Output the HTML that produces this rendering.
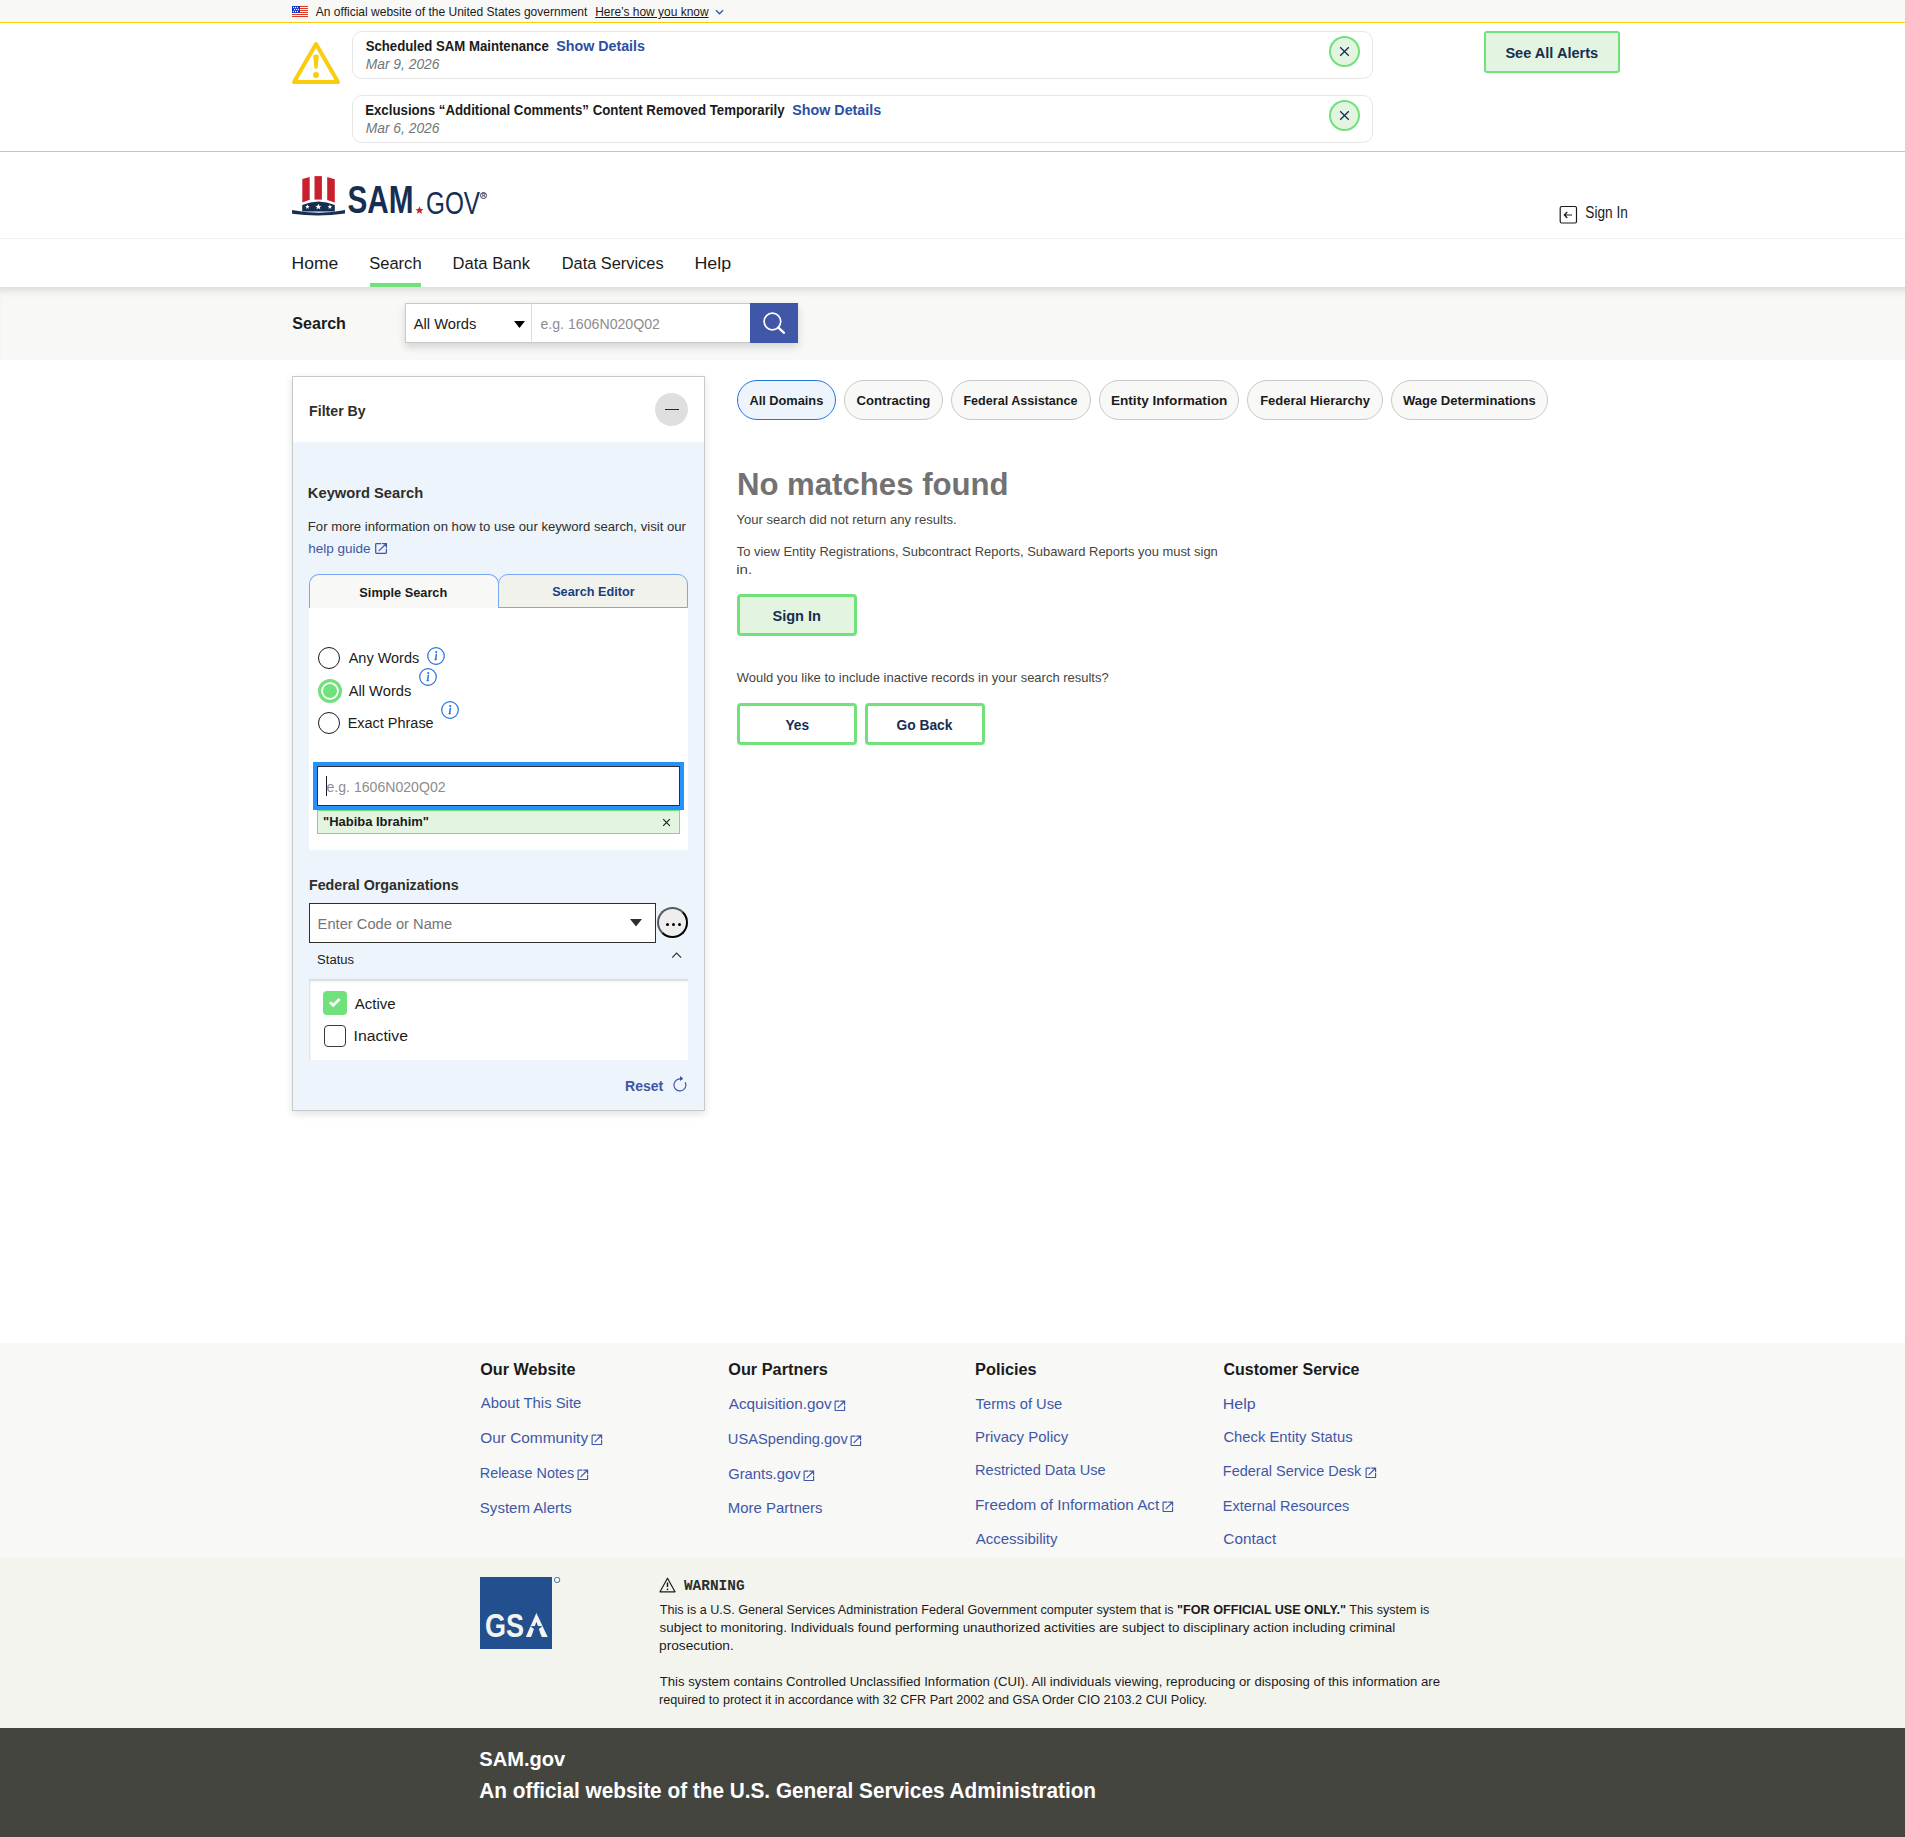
<!DOCTYPE html>
<html><head><meta charset="utf-8"><title>SAM.gov</title>
<style>
html,body{margin:0;padding:0;width:1905px;height:1837px;overflow:hidden;background:#fff;position:relative;font-family:"Liberation Sans", sans-serif}
body>div, body>svg{position:absolute}
.t{white-space:nowrap}
.ext{vertical-align:-1px}
b{font-weight:700}
#fit0{transform:translateX(-0.18px) scaleX(0.9468);transform-origin:0 0}#fit1{transform:translateX(-0.86px) scaleX(0.9424);transform-origin:0 0}#fit2{transform:translateX(-0.32px) scaleX(0.9413);transform-origin:0 0}#fit3{transform:translateX(-0.68px) scaleX(1.0169);transform-origin:0 0}#fit4{transform:translateX(-0.31px) scaleX(0.9879);transform-origin:0 0}#fit5{transform:translateX(-0.83px) scaleX(0.9463);transform-origin:0 0}#fit6{transform:translateX(-0.67px) scaleX(1.0192);transform-origin:0 0}#fit7{transform:translateX(-0.31px) scaleX(0.9879);transform-origin:0 0}#fit8{transform:translateX(-0.60px) scaleX(1.0038);transform-origin:0 0}#fit9{transform:translateX(-0.64px) scaleX(0.8422);transform-origin:0 0}#fit10{transform:translateX(-1.39px) scaleX(1.0440);transform-origin:0 0}#fit11{transform:translateX(-0.86px) scaleX(0.9867);transform-origin:0 0}#fit12{transform:translateX(-1.45px) scaleX(0.9877);transform-origin:0 0}#fit13{transform:translateX(-1.29px) scaleX(0.9751);transform-origin:0 0}#fit14{transform:translateX(-1.62px) scaleX(1.0635);transform-origin:0 0}#fit15{transform:translateX(-0.68px) scaleX(0.9455);transform-origin:0 0}#fit16{transform:translateX(-0.23px) scaleX(0.9680);transform-origin:0 0}#fit17{transform:translateX(-0.62px) scaleX(0.9319);transform-origin:0 0}#fit18{transform:translateX(-0.90px) scaleX(0.9954);transform-origin:0 0}#fit19{transform:translateX(-1.13px) scaleX(1.0219);transform-origin:0 0}#fit20{transform:translateX(-1.18px) scaleX(1.0102);transform-origin:0 0}#fit21{transform:translateX(-0.78px) scaleX(1.0399);transform-origin:0 0}#fit22{transform:translateX(-0.66px) scaleX(0.9812);transform-origin:0 0}#fit23{transform:translateX(-0.86px) scaleX(0.9758);transform-origin:0 0}#fit24{transform:translateX(-0.34px) scaleX(0.9865);transform-origin:0 0}#fit25{transform:translateX(-0.34px) scaleX(1.0023);transform-origin:0 0}#fit26{transform:translateX(-1.29px) scaleX(0.9838);transform-origin:0 0}#fit27{transform:translateX(-0.51px) scaleX(0.9592);transform-origin:0 0}#fit28{transform:translateX(-0.94px) scaleX(0.9966);transform-origin:0 0}#fit29{transform:translateX(-1.03px) scaleX(1.0184);transform-origin:0 0}#fit30{transform:translateX(-1.39px) scaleX(0.9995);transform-origin:0 0}#fit31{transform:translateX(-0.89px) scaleX(1.0835);transform-origin:0 0}#fit32{transform:translateX(-0.23px) scaleX(1.0223);transform-origin:0 0}#fit33{transform:translateX(-1.41px) scaleX(1.0731);transform-origin:0 0}#fit34{transform:translateX(-0.98px) scaleX(1.0154);transform-origin:0 0}#fit35{transform:translateX(-0.59px) scaleX(0.9834);transform-origin:0 0}#fit36{transform:translateX(-0.48px) scaleX(1.0108);transform-origin:0 0}#fit37{transform:translateX(-0.57px) scaleX(0.9666);transform-origin:0 0}#fit38{transform:translateX(-1.02px) scaleX(1.0455);transform-origin:0 0}#fit39{transform:translateX(-0.87px) scaleX(0.9997);transform-origin:0 0}#fit40{transform:translateX(-0.10px) scaleX(1.0037);transform-origin:0 0}#fit41{transform:translateX(-2.10px) scaleX(0.9890);transform-origin:0 0}#fit42{transform:translateX(-0.53px) scaleX(1.0046);transform-origin:0 0}#fit43{transform:translateX(-0.28px) scaleX(0.9952);transform-origin:0 0}#fit44{transform:translateX(-0.74px) scaleX(1.1632);transform-origin:0 0}#fit45{transform:translateX(-0.56px) scaleX(1.0399);transform-origin:0 0}#fit46{transform:translateX(-0.32px) scaleX(0.9983);transform-origin:0 0}#fit47{transform:translateX(-0.59px) scaleX(0.9794);transform-origin:0 0}#fit48{transform:translateX(-0.55px) scaleX(0.9864);transform-origin:0 0}#fit49{transform:translateX(-0.76px) scaleX(0.9665);transform-origin:0 0}#fit50{transform:translateX(-0.23px) scaleX(1.0397);transform-origin:0 0}#fit51{transform:translateX(-0.85px) scaleX(1.0783);transform-origin:0 0}#fit52{transform:translateX(-1.19px) scaleX(1.0052);transform-origin:0 0}#fit53{transform:translateX(-1.16px) scaleX(1.0510);transform-origin:0 0}#fit54{transform:translateX(-0.76px) scaleX(0.9710);transform-origin:0 0}#fit55{transform:translateX(-0.23px) scaleX(1.0691);transform-origin:0 0}#fit56{transform:translateX(-1.16px) scaleX(1.0263);transform-origin:0 0}#fit57{transform:translateX(-0.85px) scaleX(1.0351);transform-origin:0 0}#fit58{transform:translateX(-1.24px) scaleX(1.0455);transform-origin:0 0}#fit59{transform:translateX(-0.91px) scaleX(0.9704);transform-origin:0 0}#fit60{transform:translateX(-0.40px) scaleX(1.0286);transform-origin:0 0}#fit61{transform:translateX(-0.98px) scaleX(1.0469);transform-origin:0 0}#fit62{transform:translateX(-0.96px) scaleX(1.0211);transform-origin:0 0}#fit63{transform:translateX(-1.00px) scaleX(1.0684);transform-origin:0 0}#fit64{transform:translateX(-0.33px) scaleX(1.0516);transform-origin:0 0}#fit65{transform:translateX(-0.55px) scaleX(0.9529);transform-origin:0 0}#fit66{transform:translateX(-1.31px) scaleX(1.1183);transform-origin:0 0}#fit67{transform:translateX(-0.61px) scaleX(1.0352);transform-origin:0 0}#fit68{transform:translateX(-1.19px) scaleX(1.0136);transform-origin:0 0}#fit69{transform:translateX(-1.19px) scaleX(1.0141);transform-origin:0 0}#fit70{transform:translateX(-0.63px) scaleX(1.0715);transform-origin:0 0}#fit71{transform:translateX(-0.11px) scaleX(1.0316);transform-origin:0 0}#fit72{transform:translateX(-0.26px) scaleX(0.9942);transform-origin:0 0}#fit73{transform:translateX(-0.44px) scaleX(1.0559);transform-origin:0 0}#fit74{transform:translateX(-0.98px) scaleX(1.0815);transform-origin:0 0}#fit75{transform:translateX(-0.27px) scaleX(1.0360);transform-origin:0 0}#fit76{transform:translateX(-0.91px) scaleX(0.9941);transform-origin:0 0}#fit77{transform:translateX(-0.75px) scaleX(0.9803);transform-origin:0 0}#fit78{transform:translateX(-0.68px) scaleX(0.9529);transform-origin:0 0}
</style></head><body>
<div style="left:0px;top:0px;width:1905px;height:22px;background:#f8f8f7"></div>
<div style="left:0px;top:22px;width:1905px;height:1px;background:#facc10"></div>
<svg style="left:292px;top:6px" width="16" height="11" viewBox="0 0 16 11" shape-rendering="crispEdges">
<rect width="16" height="11" fill="#fff"/>
<g fill="#d83c22"><rect y="0" width="16" height="1"/><rect y="2" width="16" height="1"/><rect y="4" width="16" height="1"/><rect y="6" width="16" height="1"/><rect y="8" width="16" height="1"/><rect y="10" width="16" height="1"/></g>
<rect width="8" height="7" fill="#0b2fbf"/>
</svg>
<svg style="left:292px;top:6px" width="16" height="11" viewBox="0 0 16 11">
<g fill="#fff"><circle cx="1.5" cy="1.5" r=".65"/><circle cx="3.5" cy="1.5" r=".65"/><circle cx="5.5" cy="1.5" r=".65"/><circle cx="2.5" cy="3.5" r=".65"/><circle cx="4.5" cy="3.5" r=".65"/><circle cx="6.5" cy="3.5" r=".65"/><circle cx="1.5" cy="5.5" r=".65"/><circle cx="3.5" cy="5.5" r=".65"/><circle cx="5.5" cy="5.5" r=".65"/></g>
</svg>
<div class="t " id="fit0" style="left:315.7px;top:4.00px;font-size:12.7px;line-height:16px;font-weight:400;color:#1b1b1b;">An official website of the United States government</div>
<div class="t " id="fit1" style="left:596px;top:4.00px;font-size:12.7px;line-height:16px;font-weight:400;color:#1b1b1b;text-decoration:underline;text-underline-offset:1px">Here’s how you know</div>
<svg style="left:714.5px;top:9px" width="9" height="7" viewBox="0 0 9 7"><path d="M1 1.3 L4.5 4.8 L8 1.3" fill="none" stroke="#3452a8" stroke-width="1.3"/></svg>
<svg style="left:291px;top:41px" width="50" height="44" viewBox="0 0 50 44">
<path d="M25 3 L47 41 L3 41 Z" fill="none" stroke="#facc10" stroke-width="4" stroke-linejoin="round"/>
<path d="M22.2 14.5 Q25 12.5 27.8 14.5 L26.6 27.3 Q25 28 23.4 27.3 Z" fill="#facc10"/>
<circle cx="25" cy="34" r="3" fill="#facc10"/>
</svg>
<div style="left:352px;top:31px;width:1021px;height:48px;box-sizing:border-box;border:1px solid #e6e6e6;border-radius:10px;background:#fff"></div>
<div class="t " id="fit2" style="left:365.6px;top:37.00px;font-size:14px;line-height:18px;font-weight:700;color:#1b1b1b;">Scheduled SAM Maintenance</div>
<div class="t " id="fit3" style="left:556.8px;top:37.00px;font-size:14px;line-height:18px;font-weight:700;color:#2a4ea4;">Show Details</div>
<div class="t " id="fit4" style="left:365.6px;top:54.80px;font-size:14px;line-height:18px;font-weight:400;color:#71767a;font-style:italic">Mar 9, 2026</div>
<div style="left:1328.5px;top:36px;width:31px;height:31px;box-sizing:border-box;border:2px solid #70e17b;border-radius:50%;background:#e3f5e1"></div>
<svg style="left:1337.5px;top:45px" width="13" height="13" viewBox="0 0 13 13"><path d="M2.2 2.2 L10.8 10.8 M10.8 2.2 L2.2 10.8" stroke="#1a2a4d" stroke-width="1.3"/></svg>
<div style="left:352px;top:95px;width:1021px;height:48px;box-sizing:border-box;border:1px solid #e6e6e6;border-radius:10px;background:#fff"></div>
<div class="t " id="fit5" style="left:365.6px;top:101.00px;font-size:14px;line-height:18px;font-weight:700;color:#1b1b1b;">Exclusions “Additional Comments” Content Removed Temporarily</div>
<div class="t " id="fit6" style="left:793px;top:101.00px;font-size:14px;line-height:18px;font-weight:700;color:#2a4ea4;">Show Details</div>
<div class="t " id="fit7" style="left:365.6px;top:118.80px;font-size:14px;line-height:18px;font-weight:400;color:#71767a;font-style:italic">Mar 6, 2026</div>
<div style="left:1328.5px;top:100px;width:31px;height:31px;box-sizing:border-box;border:2px solid #70e17b;border-radius:50%;background:#e3f5e1"></div>
<svg style="left:1337.5px;top:109px" width="13" height="13" viewBox="0 0 13 13"><path d="M2.2 2.2 L10.8 10.8 M10.8 2.2 L2.2 10.8" stroke="#1a2a4d" stroke-width="1.3"/></svg>
<div style="left:1484px;top:31px;width:136px;height:42px;box-sizing:border-box;border:2px solid #70e17b;border-radius:3px;background:#e3f5e1"></div>
<div class="t " id="fit8" style="left:1506.1px;top:44.00px;font-size:14.5px;line-height:18px;font-weight:700;color:#162e51;">See All Alerts</div>
<div style="left:0px;top:151px;width:1905px;height:1px;background:#facc10"></div>
<svg style="left:291px;top:175px" width="200" height="44" viewBox="0 0 200 44">
<path d="M11.3 4.1 L18.7 1.9 L18.7 24.8 L11.3 27.4 Z" fill="#c9202f"/>
<path d="M23.5 1.1 L30.9 1.1 L30.9 24.6 L23.5 24.6 Z" fill="#c9202f"/>
<path d="M36.2 2.1 L43.8 4.3 L43.8 27.6 L36.2 24.9 Z" fill="#c9202f"/>
<path d="M11.2 36.6 L11.2 30 Q27.5 23 43.8 30 L43.8 36.6 Z" fill="#162e51"/>
<path d="M1.1 35 Q27.5 40.6 54 35 L54 38.6 Q27.5 42.3 1.1 38.8 Z" fill="#162e51"/>
<g fill="#fff">
<path d="M16.4 29.6 l0.65 1.5 1.6 0.1 -1.25 1.05 0.42 1.6 -1.42 -0.85 -1.42 0.85 0.42 -1.6 -1.25 -1.05 1.6 -0.1 Z"/>
<path d="M27.4 28.8 l0.85 1.95 2.1 0.15 -1.6 1.35 0.55 2.05 -1.9 -1.1 -1.9 1.1 0.55 -2.05 -1.6 -1.35 2.1 -0.15 Z"/>
<path d="M38.9 29.6 l0.65 1.5 1.6 0.1 -1.25 1.05 0.42 1.6 -1.42 -0.85 -1.42 0.85 0.42 -1.6 -1.25 -1.05 1.6 -0.1 Z"/>
</g>
<text x="56.5" y="38" font-family="Liberation Sans" font-weight="700" font-size="39" fill="#162e51" textLength="66" lengthAdjust="spacingAndGlyphs">SAM</text>
<path d="M128.5 31.4 l1.15 2.6 2.85 0.2 -2.2 1.85 0.75 2.8 -2.55 -1.55 -2.55 1.55 0.75 -2.8 -2.2 -1.85 2.85 -0.2 Z" fill="#c9202f"/>
<text x="135" y="38.5" font-family="Liberation Sans" font-weight="400" font-size="31.5" fill="#162e51" textLength="54" lengthAdjust="spacingAndGlyphs">GOV</text>
<circle cx="192.5" cy="20.5" r="3" fill="none" stroke="#162e51" stroke-width="0.9"/>
<text x="192.5" y="22.3" font-family="Liberation Sans" font-weight="700" font-size="4.5" fill="#162e51" text-anchor="middle">R</text>
</svg>
<div style="left:0px;top:238px;width:1905px;height:1px;background:#efefec"></div>
<svg style="left:1559px;top:205px" width="19" height="19" viewBox="0 0 19 19"><rect x="1.2" y="1.5" width="16.3" height="16.5" rx="1.5" fill="none" stroke="#1b1b1b" stroke-width="1.2"/><path d="M13 10 H5.5 M8.3 7 L5.3 10 L8.3 13" fill="none" stroke="#1b1b1b" stroke-width="1.2"/></svg>
<div class="t " id="fit9" style="left:1586.1px;top:202.30px;font-size:16.2px;line-height:20px;font-weight:400;color:#1b1b1b;">Sign In</div>
<div class="t " id="fit10" style="left:292.5px;top:253.00px;font-size:16.8px;line-height:21px;font-weight:400;color:#1b1b1b;">Home</div>
<div class="t " id="fit11" style="left:370px;top:253.00px;font-size:16.8px;line-height:21px;font-weight:400;color:#1b1b1b;">Search</div>
<div class="t " id="fit12" style="left:454.2px;top:253.00px;font-size:16.8px;line-height:21px;font-weight:400;color:#1b1b1b;">Data Bank</div>
<div class="t " id="fit13" style="left:563.1px;top:253.00px;font-size:16.8px;line-height:21px;font-weight:400;color:#1b1b1b;">Data Services</div>
<div class="t " id="fit14" style="left:695.9px;top:253.00px;font-size:16.8px;line-height:21px;font-weight:400;color:#1b1b1b;">Help</div>
<div style="left:370px;top:283px;width:51px;height:4px;background:#70e17b"></div>
<div style="left:0px;top:287px;width:1905px;height:73px;background:#f8f8f6;box-shadow:inset 0 9px 8px -6px rgba(0,0,0,.13)"></div>
<div class="t " id="fit15" style="left:292.6px;top:312.60px;font-size:17px;line-height:21px;font-weight:700;color:#1b1b1b;">Search</div>
<div style="left:405px;top:303px;width:393px;height:40px;box-shadow:0 4px 8px rgba(0,0,0,.15)"></div>
<div style="left:405px;top:303px;width:127px;height:40px;box-sizing:border-box;border:1px solid #c9c9c9;background:#fff"></div>
<div class="t " id="fit16" style="left:414.3px;top:313.60px;font-size:15.2px;line-height:19px;font-weight:400;color:#1b1b1b;">All Words</div>
<svg style="left:513.5px;top:321px" width="11" height="7" viewBox="0 0 11 7"><path d="M0 0 H11 L5.5 7 Z" fill="#000"/></svg>
<div style="left:531px;top:303px;width:220px;height:40px;box-sizing:border-box;border:1px solid #c9c9c9;border-left:1px solid #dcdcdc;background:#fff"></div>
<div class="t " id="fit17" style="left:540.8px;top:314.00px;font-size:15.2px;line-height:19px;font-weight:400;color:#8d8d8d;">e.g. 1606N020Q02</div>
<div style="left:750px;top:303px;width:48px;height:40px;background:#3f57a6"></div>
<svg style="left:761px;top:310px" width="26" height="26" viewBox="0 0 26 26"><circle cx="11.4" cy="11.5" r="8.3" fill="none" stroke="#fff" stroke-width="1.7"/><path d="M17.4 17.6 L23 22.8" stroke="#fff" stroke-width="2.3" stroke-linecap="round"/></svg>
<div style="left:292px;top:376px;width:413px;height:735px;box-sizing:border-box;border:1px solid #c9c9c9;background:#edf4fb;box-shadow:0 3px 8px rgba(0,0,0,.12)"></div>
<div style="left:293px;top:377px;width:411px;height:65px;background:#fff"></div>
<div class="t " id="fit18" style="left:309.6px;top:402.00px;font-size:14.2px;line-height:18px;font-weight:700;color:#2e2e2a;">Filter By</div>
<div style="left:655px;top:393px;width:33px;height:33px;border-radius:50%;background:#dfdfdf"></div>
<div style="left:665px;top:408.8px;width:14px;height:1.6px;background:#162e51"></div>
<div class="t " id="fit19" style="left:309.4px;top:484.10px;font-size:14.4px;line-height:18px;font-weight:700;color:#2e2e2a;">Keyword Search</div>
<div class="t " id="fit20" style="left:309.2px;top:518.50px;font-size:13px;line-height:16px;font-weight:400;color:#2e2e2a;">For more information on how to use our keyword search, visit our</div>
<div class="t " id="fit21" style="left:309.2px;top:540.50px;font-size:13px;line-height:16px;font-weight:400;color:#3f57a6;">help guide</div>
<svg style="left:374px;top:542px" width="14" height="14" viewBox="0 0 14 14"><path d="M6.6 1.6 H2.4 Q1.7 1.6 1.7 2.3 V10.6 Q1.7 11.3 2.4 11.3 H11.7 Q12.4 11.3 12.4 10.6 V7.2" fill="none" stroke="#3f57a6" stroke-width="1.25" stroke-linecap="round"/><path d="M8.3 1.6 H12.4 V5.3 M12 2 L5 8.6" fill="none" stroke="#3f57a6" stroke-width="1.25" stroke-linecap="round"/></svg>
<div style="left:309px;top:574px;width:190px;height:34px;box-sizing:border-box;border:1px solid #7aa6f3;border-bottom:none;border-radius:10px 10px 0 0;background:#f8f8f7"></div>
<div style="left:498px;top:574px;width:190px;height:34px;box-sizing:border-box;border:1px solid #7aa6f3;border-radius:10px 10px 0 0;background:#f2f2ed"></div>
<div class="t " id="fit22" style="left:360.2px;top:584.50px;font-size:13px;line-height:16px;font-weight:700;color:#1b1b1b;">Simple Search</div>
<div class="t " id="fit23" style="left:552.5px;top:583.50px;font-size:13px;line-height:16px;font-weight:700;color:#1a3e7f;">Search Editor</div>
<div style="left:309px;top:608px;width:379px;height:242px;background:#fff"></div>
<div style="left:318px;top:647.0px;width:22px;height:22px;box-sizing:border-box;border:1.5px solid #1b1b1b;border-radius:50%;background:#fff"></div>
<div class="t " id="fit24" style="left:349.2px;top:649.00px;font-size:14.7px;line-height:18px;font-weight:400;color:#1b1b1b;">Any Words</div>
<svg style="left:427px;top:647px" width="18" height="18" viewBox="0 0 18 18"><circle cx="9" cy="9" r="8.3" fill="none" stroke="#2672de" stroke-width="1.2"/><circle cx="9.2" cy="5.1" r="1.05" fill="#2672de"/><path d="M9.3 7.6 L8.6 12.6" stroke="#2672de" stroke-width="1.5" stroke-linecap="round"/><path d="M7.9 12.7 L9.3 12.5" stroke="#2672de" stroke-width="1.1" stroke-linecap="round"/></svg>
<div style="left:318px;top:678.5px;width:24px;height:24px;box-sizing:border-box;border:3px solid #70e17b;border-radius:50%;background:#70e17b;box-shadow:inset 0 0 0 2px #fff"></div>
<div class="t " id="fit25" style="left:349.2px;top:681.50px;font-size:14.7px;line-height:18px;font-weight:400;color:#1b1b1b;">All Words</div>
<svg style="left:419.2px;top:668px" width="18" height="18" viewBox="0 0 18 18"><circle cx="9" cy="9" r="8.3" fill="none" stroke="#2672de" stroke-width="1.2"/><circle cx="9.2" cy="5.1" r="1.05" fill="#2672de"/><path d="M9.3 7.6 L8.6 12.6" stroke="#2672de" stroke-width="1.5" stroke-linecap="round"/><path d="M7.9 12.7 L9.3 12.5" stroke="#2672de" stroke-width="1.1" stroke-linecap="round"/></svg>
<div style="left:318px;top:712.0px;width:22px;height:22px;box-sizing:border-box;border:1.5px solid #1b1b1b;border-radius:50%;background:#fff"></div>
<div class="t " id="fit26" style="left:349.2px;top:714.00px;font-size:14.7px;line-height:18px;font-weight:400;color:#1b1b1b;">Exact Phrase</div>
<svg style="left:441px;top:701px" width="18" height="18" viewBox="0 0 18 18"><circle cx="9" cy="9" r="8.3" fill="none" stroke="#2672de" stroke-width="1.2"/><circle cx="9.2" cy="5.1" r="1.05" fill="#2672de"/><path d="M9.3 7.6 L8.6 12.6" stroke="#2672de" stroke-width="1.5" stroke-linecap="round"/><path d="M7.9 12.7 L9.3 12.5" stroke="#2672de" stroke-width="1.1" stroke-linecap="round"/></svg>
<div style="left:313px;top:762px;width:371px;height:48px;background:#2491ff"></div>
<div style="left:317px;top:766px;width:363px;height:40px;box-sizing:border-box;border:1.5px solid #2e2e2a;background:#fff"></div>
<div style="left:326px;top:776px;width:1px;height:20px;background:#1b1b1b"></div>
<div class="t " id="fit27" style="left:327.3px;top:777.60px;font-size:14.7px;line-height:18px;font-weight:400;color:#8d8d8d;">e.g. 1606N020Q02</div>
<div style="left:317px;top:810px;width:363px;height:24px;box-sizing:border-box;border:1px solid #70e17b;background:#e3f5e1"></div>
<div class="t " id="fit28" style="left:323.9px;top:814.10px;font-size:13px;line-height:16px;font-weight:700;color:#1b1b1b;">"Habiba Ibrahim"</div>
<svg style="left:661px;top:817px" width="11" height="11" viewBox="0 0 11 11"><path d="M2.2 2.2 L8.8 8.8 M8.8 2.2 L2.2 8.8" stroke="#1b1b1b" stroke-width="1.1"/></svg>
<div class="t " id="fit29" style="left:309.7px;top:875.80px;font-size:14px;line-height:18px;font-weight:700;color:#2e2e2a;">Federal Organizations</div>
<div style="left:309px;top:903px;width:347px;height:40px;box-sizing:border-box;border:1.5px solid #2e2e2a;background:#fff"></div>
<div class="t " id="fit30" style="left:318.9px;top:914.90px;font-size:14.7px;line-height:18px;font-weight:400;color:#757575;">Enter Code or Name</div>
<svg style="left:630px;top:919px" width="12" height="8" viewBox="0 0 12 8"><path d="M0 0 H12 L6 7.6 Z" fill="#2e2e2a"/></svg>
<div style="left:657px;top:907px;width:31px;height:31px;box-sizing:border-box;border:2px solid;border-color:#5a5a5a #000 #000 #5a5a5a;border-radius:50%;background:#eee"></div>
<div style="left:666.0px;top:922.5px;width:3px;height:3px;border-radius:50%;background:#000"></div>
<div style="left:671.7px;top:922.5px;width:3px;height:3px;border-radius:50%;background:#000"></div>
<div style="left:677.5px;top:922.5px;width:3px;height:3px;border-radius:50%;background:#000"></div>
<div class="t " id="fit31" style="left:317.6px;top:953.10px;font-size:12px;line-height:15px;font-weight:400;color:#1b1b1b;">Status</div>
<svg style="left:671px;top:950px" width="12" height="9" viewBox="0 0 12 9"><path d="M1.2 7.6 L5.6 3 L10.1 7.6" fill="none" stroke="#2e2e2e" stroke-width="1.1"/></svg>
<div style="left:309px;top:979px;width:379px;height:81px;background:#fff;box-shadow:inset 1px 2px 2px rgba(0,0,0,.15)"></div>
<div style="left:323px;top:991px;width:24px;height:24px;border-radius:4px;background:#70e17b"></div>
<svg style="left:326px;top:994px" width="18" height="18" viewBox="0 0 18 18"><path d="M4 8.2 L7.3 11.3 L13.6 5" fill="none" stroke="#fff" stroke-width="2.8"/></svg>
<div class="t " id="fit32" style="left:355.1px;top:994.80px;font-size:14.7px;line-height:18px;font-weight:400;color:#1b1b1b;">Active</div>
<div style="left:324px;top:1025px;width:22px;height:22px;box-sizing:border-box;border:1.5px solid #3a3a36;border-radius:4px;background:#fff"></div>
<div class="t " id="fit33" style="left:355.1px;top:1027.00px;font-size:14.7px;line-height:18px;font-weight:400;color:#1b1b1b;">Inactive</div>
<div class="t " id="fit34" style="left:625.5px;top:1077.90px;font-size:13.8px;line-height:17px;font-weight:700;color:#3f57a6;">Reset</div>
<svg style="left:672px;top:1075px" width="16" height="17" viewBox="0 0 16 17"><path d="M10.3 4.4 A6 6 0 1 0 13.3 7.3" fill="none" stroke="#3f57a6" stroke-width="1.2"/><path d="M8 1 L11.2 3.6 L8 6 Z" fill="#3f57a6"/></svg>
<div style="left:737px;top:380px;width:99px;height:40px;box-sizing:border-box;border:1px solid #2672de;border-radius:20px;background:#edf4fb"></div>
<div class="t " id="fit35" style="left:750.15px;top:392.90px;font-size:13px;line-height:16px;font-weight:700;color:#1b1b1b;">All Domains</div>
<div style="left:844px;top:380px;width:99px;height:40px;box-sizing:border-box;border:1px solid #c9c9c9;border-radius:20px;background:#f8f8f7"></div>
<div class="t " id="fit36" style="left:857.3px;top:392.90px;font-size:13px;line-height:16px;font-weight:700;color:#1b1b1b;">Contracting</div>
<div style="left:951px;top:380px;width:140px;height:40px;box-sizing:border-box;border:1px solid #c9c9c9;border-radius:20px;background:#f8f8f7"></div>
<div class="t " id="fit37" style="left:964.35px;top:392.90px;font-size:13px;line-height:16px;font-weight:700;color:#1b1b1b;">Federal Assistance</div>
<div style="left:1099px;top:380px;width:140px;height:40px;box-sizing:border-box;border:1px solid #c9c9c9;border-radius:20px;background:#f8f8f7"></div>
<div class="t " id="fit38" style="left:1111.7px;top:392.90px;font-size:13px;line-height:16px;font-weight:700;color:#1b1b1b;">Entity Information</div>
<div style="left:1247px;top:380px;width:136px;height:40px;box-sizing:border-box;border:1px solid #c9c9c9;border-radius:20px;background:#f8f8f7"></div>
<div class="t " id="fit39" style="left:1260.55px;top:392.90px;font-size:13px;line-height:16px;font-weight:700;color:#1b1b1b;">Federal Hierarchy</div>
<div style="left:1391px;top:380px;width:157px;height:40px;box-sizing:border-box;border:1px solid #c9c9c9;border-radius:20px;background:#f8f8f7"></div>
<div class="t " id="fit40" style="left:1403.35px;top:392.90px;font-size:13px;line-height:16px;font-weight:700;color:#1b1b1b;">Wage Determinations</div>
<div class="t " id="fit41" style="left:738.7px;top:464.90px;font-size:31.5px;line-height:39px;font-weight:700;color:#727272;">No matches found</div>
<div class="t " id="fit42" style="left:737.4px;top:511.80px;font-size:13px;line-height:16px;font-weight:400;color:#454540;">Your search did not return any results.</div>
<div class="t " id="fit43" style="left:737.3px;top:543.60px;font-size:13px;line-height:16px;font-weight:400;color:#454540;">To view Entity Registrations, Subcontract Reports, Subaward Reports you must sign</div>
<div class="t " id="fit44" style="left:737.3px;top:561.70px;font-size:13px;line-height:16px;font-weight:400;color:#454540;">in.</div>
<div style="left:737px;top:594px;width:120px;height:42px;box-sizing:border-box;border:3px solid #70e17b;border-radius:4px;background:#e3f5e1"></div>
<div class="t " id="fit45" style="left:773.4px;top:606.90px;font-size:14px;line-height:18px;font-weight:700;color:#162e51;">Sign In</div>
<div class="t " id="fit46" style="left:737.4px;top:669.70px;font-size:13px;line-height:16px;font-weight:400;color:#454540;">Would you like to include inactive records in your search results?</div>
<div style="left:737px;top:703px;width:120px;height:42px;box-sizing:border-box;border:3px solid #70e17b;border-radius:4px;background:#fff"></div>
<div class="t " id="fit47" style="left:785.75px;top:716.00px;font-size:14px;line-height:18px;font-weight:700;color:#162e51;">Yes</div>
<div style="left:865px;top:703px;width:120px;height:42px;box-sizing:border-box;border:3px solid #70e17b;border-radius:4px;background:#fff"></div>
<div class="t " id="fit48" style="left:897.25px;top:716.00px;font-size:14px;line-height:18px;font-weight:700;color:#162e51;">Go Back</div>
<div style="left:0px;top:1343px;width:1905px;height:214px;background:#f8f8f7"></div>
<div class="t " id="fit49" style="left:480.5px;top:1358.90px;font-size:16.8px;line-height:21px;font-weight:700;color:#1b1b1b;">Our Website</div>
<div class="t " id="fit50" style="left:480.5px;top:1394.30px;font-size:14.3px;line-height:18px;font-weight:400;color:#3f57a6;">About This Site</div>
<div class="t " id="fit51" style="left:480.5px;top:1428.60px;font-size:14.3px;line-height:18px;font-weight:400;color:#3f57a6;">Our Community</div>
<svg width="12" height="12" viewBox="0 0 12 12" style="position:absolute;left:590.7px;top:1433.6px"><path d="M5 1.1 H1.7 Q1.1 1.1 1.1 1.7 V9.9 Q1.1 10.5 1.7 10.5 H10 Q10.6 10.5 10.6 9.9 V6.4" fill="none" stroke="#3f57a6" stroke-width="1.15" stroke-linecap="round"/><path d="M6.7 1.1 H10.6 V4.7 M10.2 1.5 L4 7.6" fill="none" stroke="#3f57a6" stroke-width="1.15" stroke-linecap="round"/></svg>
<div class="t " id="fit52" style="left:480.5px;top:1463.60px;font-size:14.3px;line-height:18px;font-weight:400;color:#3f57a6;">Release Notes</div>
<svg width="12" height="12" viewBox="0 0 12 12" style="position:absolute;left:576.6px;top:1468.6px"><path d="M5 1.1 H1.7 Q1.1 1.1 1.1 1.7 V9.9 Q1.1 10.5 1.7 10.5 H10 Q10.6 10.5 10.6 9.9 V6.4" fill="none" stroke="#3f57a6" stroke-width="1.15" stroke-linecap="round"/><path d="M6.7 1.1 H10.6 V4.7 M10.2 1.5 L4 7.6" fill="none" stroke="#3f57a6" stroke-width="1.15" stroke-linecap="round"/></svg>
<div class="t " id="fit53" style="left:480.5px;top:1498.70px;font-size:14.3px;line-height:18px;font-weight:400;color:#3f57a6;">System Alerts</div>
<div class="t " id="fit54" style="left:728.5px;top:1358.90px;font-size:16.8px;line-height:21px;font-weight:700;color:#1b1b1b;">Our Partners</div>
<div class="t " id="fit55" style="left:728.5px;top:1394.50px;font-size:14.3px;line-height:18px;font-weight:400;color:#3f57a6;">Acquisition.gov</div>
<svg width="12" height="12" viewBox="0 0 12 12" style="position:absolute;left:834.1px;top:1399.5px"><path d="M5 1.1 H1.7 Q1.1 1.1 1.1 1.7 V9.9 Q1.1 10.5 1.7 10.5 H10 Q10.6 10.5 10.6 9.9 V6.4" fill="none" stroke="#3f57a6" stroke-width="1.15" stroke-linecap="round"/><path d="M6.7 1.1 H10.6 V4.7 M10.2 1.5 L4 7.6" fill="none" stroke="#3f57a6" stroke-width="1.15" stroke-linecap="round"/></svg>
<div class="t " id="fit56" style="left:728.5px;top:1429.50px;font-size:14.3px;line-height:18px;font-weight:400;color:#3f57a6;">USASpending.gov</div>
<svg width="12" height="12" viewBox="0 0 12 12" style="position:absolute;left:850.4px;top:1434.5px"><path d="M5 1.1 H1.7 Q1.1 1.1 1.1 1.7 V9.9 Q1.1 10.5 1.7 10.5 H10 Q10.6 10.5 10.6 9.9 V6.4" fill="none" stroke="#3f57a6" stroke-width="1.15" stroke-linecap="round"/><path d="M6.7 1.1 H10.6 V4.7 M10.2 1.5 L4 7.6" fill="none" stroke="#3f57a6" stroke-width="1.15" stroke-linecap="round"/></svg>
<div class="t " id="fit57" style="left:728.5px;top:1464.50px;font-size:14.3px;line-height:18px;font-weight:400;color:#3f57a6;">Grants.gov</div>
<svg width="12" height="12" viewBox="0 0 12 12" style="position:absolute;left:803.1px;top:1469.5px"><path d="M5 1.1 H1.7 Q1.1 1.1 1.1 1.7 V9.9 Q1.1 10.5 1.7 10.5 H10 Q10.6 10.5 10.6 9.9 V6.4" fill="none" stroke="#3f57a6" stroke-width="1.15" stroke-linecap="round"/><path d="M6.7 1.1 H10.6 V4.7 M10.2 1.5 L4 7.6" fill="none" stroke="#3f57a6" stroke-width="1.15" stroke-linecap="round"/></svg>
<div class="t " id="fit58" style="left:728.5px;top:1499.30px;font-size:14.3px;line-height:18px;font-weight:400;color:#3f57a6;">More Partners</div>
<div class="t " id="fit59" style="left:976px;top:1358.90px;font-size:16.8px;line-height:21px;font-weight:700;color:#1b1b1b;">Policies</div>
<div class="t " id="fit60" style="left:976px;top:1394.90px;font-size:14.3px;line-height:18px;font-weight:400;color:#3f57a6;">Terms of Use</div>
<div class="t " id="fit61" style="left:976px;top:1428.40px;font-size:14.3px;line-height:18px;font-weight:400;color:#3f57a6;">Privacy Policy</div>
<div class="t " id="fit62" style="left:976px;top:1461.40px;font-size:14.3px;line-height:18px;font-weight:400;color:#3f57a6;">Restricted Data Use</div>
<div class="t " id="fit63" style="left:976px;top:1495.80px;font-size:14.3px;line-height:18px;font-weight:400;color:#3f57a6;">Freedom of Information Act</div>
<svg width="12" height="12" viewBox="0 0 12 12" style="position:absolute;left:1162.4px;top:1500.8px"><path d="M5 1.1 H1.7 Q1.1 1.1 1.1 1.7 V9.9 Q1.1 10.5 1.7 10.5 H10 Q10.6 10.5 10.6 9.9 V6.4" fill="none" stroke="#3f57a6" stroke-width="1.15" stroke-linecap="round"/><path d="M6.7 1.1 H10.6 V4.7 M10.2 1.5 L4 7.6" fill="none" stroke="#3f57a6" stroke-width="1.15" stroke-linecap="round"/></svg>
<div class="t " id="fit64" style="left:976px;top:1530.40px;font-size:14.3px;line-height:18px;font-weight:400;color:#3f57a6;">Accessibility</div>
<div class="t " id="fit65" style="left:1224.3px;top:1358.90px;font-size:16.8px;line-height:21px;font-weight:700;color:#1b1b1b;">Customer Service</div>
<div class="t " id="fit66" style="left:1224.3px;top:1394.90px;font-size:14.3px;line-height:18px;font-weight:400;color:#3f57a6;">Help</div>
<div class="t " id="fit67" style="left:1224.3px;top:1428.40px;font-size:14.3px;line-height:18px;font-weight:400;color:#3f57a6;">Check Entity Status</div>
<div class="t " id="fit68" style="left:1224.3px;top:1461.60px;font-size:14.3px;line-height:18px;font-weight:400;color:#3f57a6;">Federal Service Desk</div>
<svg width="12" height="12" viewBox="0 0 12 12" style="position:absolute;left:1364.5px;top:1466.6px"><path d="M5 1.1 H1.7 Q1.1 1.1 1.1 1.7 V9.9 Q1.1 10.5 1.7 10.5 H10 Q10.6 10.5 10.6 9.9 V6.4" fill="none" stroke="#3f57a6" stroke-width="1.15" stroke-linecap="round"/><path d="M6.7 1.1 H10.6 V4.7 M10.2 1.5 L4 7.6" fill="none" stroke="#3f57a6" stroke-width="1.15" stroke-linecap="round"/></svg>
<div class="t " id="fit69" style="left:1224.3px;top:1496.50px;font-size:14.3px;line-height:18px;font-weight:400;color:#3f57a6;">External Resources</div>
<div class="t " id="fit70" style="left:1224.3px;top:1530.40px;font-size:14.3px;line-height:18px;font-weight:400;color:#3f57a6;">Contact</div>
<div style="left:0px;top:1557px;width:1905px;height:171px;background:#f4f4ef"></div>
<svg style="left:480px;top:1577px" width="82" height="73" viewBox="0 0 82 73">
<rect width="72" height="72" fill="#22508f"/>
<text x="5" y="60.3" font-family="Liberation Sans" font-weight="700" font-size="34" fill="#f4f4ef" textLength="39" lengthAdjust="spacingAndGlyphs">GS</text>
<path d="M56.4 35.9 L67.7 60 L45.8 60 Z" fill="#f4f4ef"/>
<path d="M56.4 47 L61.8 60 L51 60 Z" fill="#22508f"/>
<path d="M56.40,44.80 L57.93,49.10 L62.49,49.22 L58.87,52.00 L60.16,56.38 L56.40,53.80 L52.64,56.38 L53.93,52.00 L50.31,49.22 L54.87,49.10 Z" fill="#22508f"/>
<circle cx="77.1" cy="2.9" r="2.7" fill="none" stroke="#22508f" stroke-width="0.8"/>
</svg>
<svg style="left:659px;top:1577px" width="17" height="16" viewBox="0 0 17 16"><path d="M8.5 1.2 L16 14.8 H1 Z" fill="none" stroke="#1b1b1b" stroke-width="1.2" stroke-linejoin="round"/><path d="M8.5 5.5 V10" stroke="#1b1b1b" stroke-width="1.5"/><circle cx="8.5" cy="12.3" r=".9" fill="#1b1b1b"/></svg>
<div class="t " id="fit71" style="left:683.7px;top:1577.20px;font-size:14px;line-height:18px;font-weight:700;color:#2e2e2a;font-family:'Liberation Mono',monospace">WARNING</div>
<div class="t " id="fit72" style="left:659.5px;top:1601.70px;font-size:12.7px;line-height:16px;font-weight:400;color:#1b1b1b;">This is a U.S. General Services Administration Federal Government computer system that is <b>"FOR OFFICIAL USE ONLY."</b> This system is</div>
<div class="t " id="fit73" style="left:659.5px;top:1619.60px;font-size:12.7px;line-height:16px;font-weight:400;color:#1b1b1b;">subject to monitoring. Individuals found performing unauthorized activities are subject to disciplinary action including criminal</div>
<div class="t " id="fit74" style="left:659.5px;top:1637.80px;font-size:12.7px;line-height:16px;font-weight:400;color:#1b1b1b;">prosecution.</div>
<div class="t " id="fit75" style="left:659.5px;top:1673.60px;font-size:12.7px;line-height:16px;font-weight:400;color:#1b1b1b;">This system contains Controlled Unclassified Information (CUI). All individuals viewing, reproducing or disposing of this information are</div>
<div class="t " id="fit76" style="left:659.5px;top:1691.80px;font-size:12.7px;line-height:16px;font-weight:400;color:#1b1b1b;">required to protect it in accordance with 32 CFR Part 2002 and GSA Order CIO 2103.2 CUI Policy.</div>
<div style="left:0px;top:1728px;width:1905px;height:109px;background:#454540"></div>
<div class="t " id="fit77" style="left:480px;top:1746.20px;font-size:20.5px;line-height:26px;font-weight:700;color:#fff;">SAM.gov</div>
<div class="t " id="fit78" style="left:480px;top:1776.90px;font-size:21.8px;line-height:27px;font-weight:700;color:#fff;">An official website of the U.S. General Services Administration</div>
</body></html>
